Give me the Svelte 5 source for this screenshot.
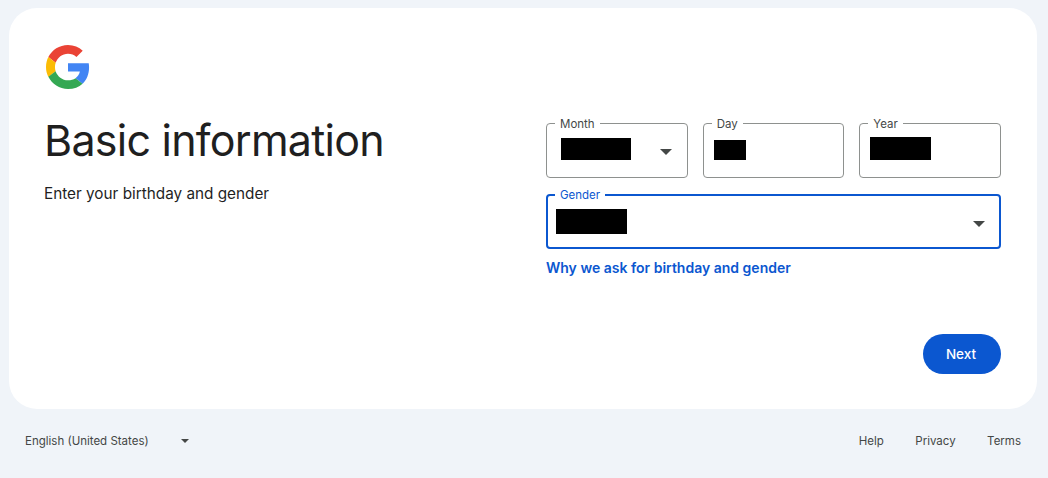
<script lang="ts">
  const footerLinks = ['Help', 'Privacy', 'Terms'];
</script>

{#snippet arrow()}
  <svg class="arrow" width="14" height="6" viewBox="0 0 14 6" aria-hidden="true"><path d="M1 0h12L7 6z" /></svg>
{/snippet}

<div class="page">
  <main class="card">
    <section class="intro">
      <svg class="logo" width="44" height="44" viewBox="0 0 48 48" aria-label="Google">
        <path fill="#EA4335" d="M24 9.5c3.54 0 6.71 1.22 9.21 3.6l6.85-6.85C35.9 2.38 30.47 0 24 0 14.62 0 6.51 5.38 2.56 13.22l7.98 6.19C12.43 13.72 17.74 9.5 24 9.5z" />
        <path fill="#4285F4" d="M46.98 24.55c0-1.57-.15-3.09-.38-4.55H24v9.02h12.94c-.58 2.96-2.26 5.48-4.78 7.18l7.73 6c4.51-4.18 7.09-10.36 7.09-17.65z" />
        <path fill="#FBBC05" d="M10.53 28.59c-.48-1.45-.76-2.99-.76-4.59s.27-3.14.76-4.59l-7.98-6.19C.92 16.46 0 20.12 0 24c0 3.88.92 7.54 2.56 10.78l7.97-6.19z" />
        <path fill="#34A853" d="M24 48c6.48 0 11.93-2.13 15.89-5.81l-7.73-6c-2.15 1.45-4.92 2.3-8.16 2.3-6.26 0-11.57-4.22-13.47-9.91l-7.98 6.19C6.51 42.62 14.62 48 24 48z" />
      </svg>
      <h1>Basic information</h1>
      <p>Enter your birthday and gender</p>
    </section>

    <section class="form">
      <div class="row">
        <div class="field month">
          <span class="label">Month</span>
          <span class="redacted"></span>
          {@render arrow()}
        </div>
        <div class="field day">
          <span class="label">Day</span>
          <span class="redacted"></span>
        </div>
        <div class="field year">
          <span class="label">Year</span>
          <span class="redacted"></span>
        </div>
      </div>
      <div class="field gender">
        <span class="label">Gender</span>
        <span class="redacted"></span>
        {@render arrow()}
      </div>
      <a class="why" href="#why">Why we ask for birthday and gender</a>
      <div class="actions">
        <button type="button">Next</button>
      </div>
    </section>
  </main>

  <footer>
    <div class="lang">
      <span>English (United States)</span>
      <svg class="small-arrow" width="8" height="4" viewBox="0 0 8 4" aria-hidden="true"><path d="M0 0h8L4 4z" /></svg>
    </div>
    <nav>
      {#each footerLinks as link}
        <a href="#{link}">{link}</a>
      {/each}
    </nav>
  </footer>
</div>

<style>
  :global(body) {
    background: #f0f4f9;
    font-family: Inter, "Liberation Sans", sans-serif;
  }

  .page {
    height: 478px;
    box-sizing: border-box;
    padding: 8px 11px 0 9px;
    overflow: hidden;
  }

  .card {
    height: 401px;
    box-sizing: border-box;
    background: #fff;
    border-radius: 28px;
    padding: 37px 36px 35px;
    display: flex;
    justify-content: space-between;
  }

  .logo {
    display: block;
    margin-left: 1px;
  }

  h1 {
    margin: 25px 0 0 -1px;
    font-size: 43px;
    line-height: 52px;
    font-weight: 400;
    letter-spacing: -0.75px;
    color: #1f1f1f;
  }

  .intro p {
    margin: 16px 0 0 -1px;
    font-size: 15.3px;
    line-height: 24px;
    color: #1f1f1f;
  }

  .form {
    width: 455px;
    padding-top: 78px;
    display: flex;
    flex-direction: column;
  }

  .row {
    display: grid;
    grid-template-columns: repeat(3, 1fr);
    gap: 15px;
    margin-bottom: 16px;
  }

  .field {
    position: relative;
    box-sizing: border-box;
    height: 55px;
    border: 1px solid #8e918f;
    border-radius: 4px;
    display: flex;
    align-items: center;
    justify-content: space-between;
  }

  .label {
    position: absolute;
    top: -8px;
    left: 8px;
    padding: 0 5px;
    background: #fff;
    font-size: 11.5px;
    line-height: 16px;
    color: #444746;
  }

  .redacted {
    display: block;
    background: #000;
  }

  .month {
    padding: 0 14px;
  }

  .month .redacted {
    width: 70px;
    height: 22px;
    margin-top: -3px;
  }

  .month .arrow {
    margin-top: 3px;
  }

  .day {
    padding: 0 10px;
  }

  .day .redacted {
    width: 32px;
    height: 20px;
    margin-top: -1px;
  }

  .year {
    padding: 0 10px;
  }

  .year .redacted {
    width: 61px;
    height: 23px;
    margin-top: -4px;
  }

  .gender {
    border: 2px solid #0b57d0;
    padding: 0 13px 0 8px;
  }

  .gender .label {
    top: -9px;
    left: 7px;
    color: #0b57d0;
  }

  .gender .redacted {
    width: 71px;
    height: 25px;
  }

  .gender .arrow {
    margin-top: 5px;
  }

  .arrow {
    fill: #444746;
  }

  .why {
    margin-top: 9px;
    font-size: 14px;
    line-height: 20px;
    font-weight: 600;
    color: #0b57d0;
    text-decoration: none;
  }

  .actions {
    margin-top: auto;
    display: flex;
    justify-content: flex-end;
  }

  button {
    width: 78px;
    height: 40px;
    padding: 0 2px 1px 0;
    border: none;
    border-radius: 20px;
    background: #0b57d0;
    color: #fff;
    font: 500 13.5px Inter, sans-serif;
  }

  footer {
    display: flex;
    justify-content: space-between;
    align-items: center;
    height: 20px;
    margin-top: 22px;
    padding: 0 16px;
    font-size: 11.5px;
    color: #444746;
  }

  .lang {
    display: flex;
    align-items: center;
    gap: 32px;
  }

  .small-arrow {
    fill: #444746;
  }

  nav {
    display: flex;
    gap: 31.5px;
  }

  nav a {
    color: inherit;
    text-decoration: none;
  }
</style>
